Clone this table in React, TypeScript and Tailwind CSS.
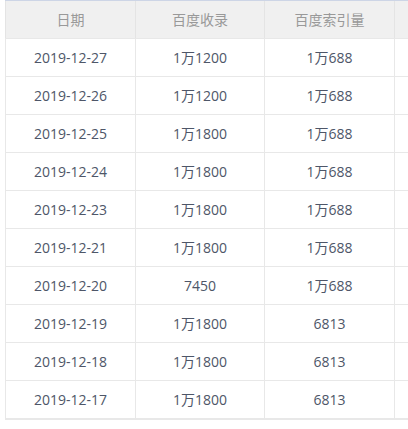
import React from "react";

const rows = [
  ["2019-12-27", "1万1200", "1万688"],
  ["2019-12-26", "1万1200", "1万688"],
  ["2019-12-25", "1万1800", "1万688"],
  ["2019-12-24", "1万1800", "1万688"],
  ["2019-12-23", "1万1800", "1万688"],
  ["2019-12-21", "1万1800", "1万688"],
  ["2019-12-20", "7450", "1万688"],
  ["2019-12-19", "1万1800", "6813"],
  ["2019-12-18", "1万1800", "6813"],
  ["2019-12-17", "1万1800", "6813"],
];

const App = () => {
  return (
    <div
      className="w-[408px] h-[429px] overflow-hidden bg-white"
      style={{ fontFamily: '"Open Sans", "Noto Sans CJK SC", sans-serif' }}
    >
      <div className="ml-[5px] w-[460px] border-t border-[#cdd5e6] border-b-2 border-b-[#e8e8e8]">
        {/* header */}
        <div className="grid grid-cols-[130px_129px_130px_71px] h-[37px] bg-[#f0f0f0] text-[14px] text-[#999]">
          {["日期", "百度收录", "百度索引量", ""].map((h, i) => (
            <div
              key={i}
              className="flex items-center justify-center border-l border-[#e4e4e4]"
            >
              {h}
            </div>
          ))}
        </div>
        {/* body */}
        {rows.map((r, i) => (
          <div
            key={i}
            className="grid grid-cols-[130px_129px_130px_71px] h-[38px] border-t border-[#e8e8e8] text-[14px] text-[#4e5668]"
          >
            {[...r, ""].map((c, j) => (
              <div
                key={j}
                className="flex items-center justify-center border-l border-[#e8e8e8]"
              >
                {c}
              </div>
            ))}
          </div>
        ))}
      </div>
    </div>
  );
};

export default App;
